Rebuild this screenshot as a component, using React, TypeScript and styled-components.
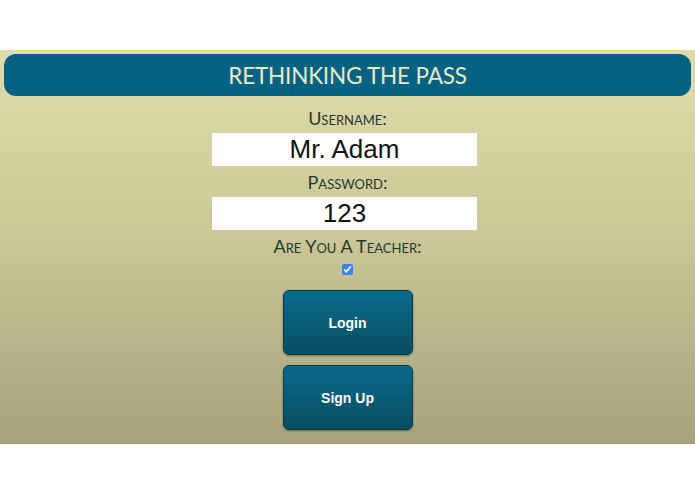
import React, { useState } from "react";
import styled, { createGlobalStyle } from "styled-components";

const GlobalStyle = createGlobalStyle`
  body {
    margin: 0;
    background: #fff;
    font-family: "Lato", "Liberation Sans", sans-serif;
  }
`;

const Page = styled.div`
  padding-top: 50px;
  height: 494px;
  box-sizing: border-box;
`;

const Stage = styled.div`
  height: 394px;
  padding: 4px 4px 0;
  box-sizing: border-box;
  background: linear-gradient(to bottom, #e0dcac 0%, #cdc898 45%, #a6a27c 100%);
  display: flex;
  flex-direction: column;
  align-items: center;
`;

const Banner = styled.h1`
  align-self: stretch;
  margin: 0;
  height: 42px;
  border-radius: 12px;
  background: #066282;
  color: #e7ebc6;
  font-family: "Lato", sans-serif;
  font-weight: 400;
  font-size: 22.5px;
  letter-spacing: -0.2px;
  display: flex;
  align-items: center;
  justify-content: center;
`;

const Label = styled.label<{ $top: number }>`
  display: block;
  margin-top: ${(p) => p.$top}px;
  height: 20px;
  line-height: 20px;
  font-family: "Lato", sans-serif;
  font-variant: small-caps;
  font-size: 18px;
  color: #1e3b2f;
`;

const Field = styled.input`
  margin: 5px 6px 0 0;
  width: 265px;
  height: 33px;
  box-sizing: border-box;
  border: none;
  outline: none;
  background: #fff;
  padding: 0;
  text-align: center;
  font-family: "Liberation Sans", Arial, sans-serif;
  font-size: 26px;
  color: #111;
`;

const Check = styled.input`
  margin: 8px 0 0;
  width: 11px;
  height: 11px;
  accent-color: #3b82f6;
`;

const ActionButton = styled.button<{ $top: number }>`
  margin-top: ${(p) => p.$top}px;
  width: 130px;
  height: 65px;
  border: 1px solid #073a48;
  border-radius: 6px;
  background: linear-gradient(to bottom, #0a6a8c 0%, #084e62 100%);
  box-shadow: 0 1px 2px rgba(40, 50, 30, 0.5);
  color: #fff;
  font-family: "Liberation Sans", Arial, sans-serif;
  font-weight: bold;
  font-size: 14px;
  cursor: pointer;
`;

export default function App() {
  const [teacher, setTeacher] = useState(true);
  return (
    <>
      <GlobalStyle />
      <Page>
        <Stage>
          <Banner>RETHINKING THE PASS</Banner>
          <Label $top={12}>Username:</Label>
          <Field defaultValue="Mr. Adam" />
          <Label $top={6}>Password:</Label>
          <Field defaultValue="123" />
          <Label $top={6}>Are You A Teacher:</Label>
          <Check
            type="checkbox"
            checked={teacher}
            onChange={() => setTeacher(!teacher)}
          />
          <ActionButton $top={15}>Login</ActionButton>
          <ActionButton $top={10}>Sign Up</ActionButton>
        </Stage>
      </Page>
    </>
  );
}
